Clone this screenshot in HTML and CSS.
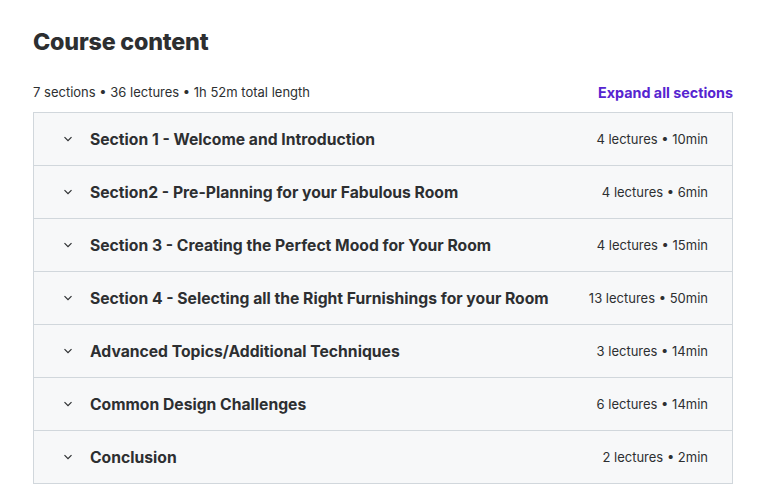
FILE: index.html
```html
<!DOCTYPE html>
<html>
<head>
<meta charset="utf-8">
<link rel="stylesheet" href="styles.css">
</head>
<body>
<div class="page">
  <h2 class="title">Course content</h2>
  <div class="meta">
    <span class="stats">7 sections • 36 lectures • 1h 52m total length</span>
    <span class="expand">Expand all sections</span>
  </div>
  <div class="list">
    <div class="row"><span class="chev"><svg width="10" height="10" viewBox="0 0 10 10"><path d="M1.5 3.2 L5 6.7 L8.5 3.2" fill="none" stroke="#2d2f31" stroke-width="1.2"/></svg></span><span class="name">Section 1 - Welcome and Introduction</span><span class="info">4 lectures • 10min</span></div>
    <div class="row"><span class="chev"><svg width="10" height="10" viewBox="0 0 10 10"><path d="M1.5 3.2 L5 6.7 L8.5 3.2" fill="none" stroke="#2d2f31" stroke-width="1.2"/></svg></span><span class="name">Section2 - Pre-Planning for your Fabulous Room</span><span class="info">4 lectures • 6min</span></div>
    <div class="row"><span class="chev"><svg width="10" height="10" viewBox="0 0 10 10"><path d="M1.5 3.2 L5 6.7 L8.5 3.2" fill="none" stroke="#2d2f31" stroke-width="1.2"/></svg></span><span class="name">Section 3 - Creating the Perfect Mood for Your Room</span><span class="info">4 lectures • 15min</span></div>
    <div class="row"><span class="chev"><svg width="10" height="10" viewBox="0 0 10 10"><path d="M1.5 3.2 L5 6.7 L8.5 3.2" fill="none" stroke="#2d2f31" stroke-width="1.2"/></svg></span><span class="name">Section 4 - Selecting all the Right Furnishings for your Room</span><span class="info">13 lectures • 50min</span></div>
    <div class="row"><span class="chev"><svg width="10" height="10" viewBox="0 0 10 10"><path d="M1.5 3.2 L5 6.7 L8.5 3.2" fill="none" stroke="#2d2f31" stroke-width="1.2"/></svg></span><span class="name">Advanced Topics/Additional Techniques</span><span class="info">3 lectures • 14min</span></div>
    <div class="row"><span class="chev"><svg width="10" height="10" viewBox="0 0 10 10"><path d="M1.5 3.2 L5 6.7 L8.5 3.2" fill="none" stroke="#2d2f31" stroke-width="1.2"/></svg></span><span class="name">Common Design Challenges</span><span class="info">6 lectures • 14min</span></div>
    <div class="row"><span class="chev"><svg width="10" height="10" viewBox="0 0 10 10"><path d="M1.5 3.2 L5 6.7 L8.5 3.2" fill="none" stroke="#2d2f31" stroke-width="1.2"/></svg></span><span class="name">Conclusion</span><span class="info">2 lectures • 2min</span></div>
  </div>
</div>
</body>
</html>
```
FILE: styles.css
```css
html, body {
  margin: 0;
  padding: 0;
  background: #ffffff;
}
body {
  font-family: Inter, "Liberation Sans", sans-serif;
  color: #2d2f31;
}
.page {
  width: 700px;
  padding: 28px 0 0 33px;
}
.title {
  margin: 0;
  font-size: 23.3px;
  font-weight: 800;
  line-height: 28px;
  letter-spacing: -0.2px;
}
.meta {
  display: flex;
  justify-content: space-between;
  align-items: flex-end;
  margin-top: 26px;
  height: 20px;
  padding-bottom: 10px;
}
.stats {
  font-size: 13px;
  line-height: 20px;
}
.expand {
  font-size: 14.3px;
  font-weight: 700;
  color: #5624d0;
  line-height: 20px;
  margin-bottom: -1px;
}
.list {
  border: 1px solid #d1d7dc;
  border-bottom: none;
}
.row {
  display: flex;
  align-items: center;
  height: 52px;
  border-bottom: 1px solid #d1d7dc;
  background: #f7f8f9;
  padding: 0 24px 0 29px;
}
.chev {
  width: 10px;
  height: 10px;
  display: flex;
  margin-right: 17px;
}
.name {
  flex: 1;
  font-size: 15.7px;
  font-weight: 700;
}
.info {
  font-size: 13px;
}
```
